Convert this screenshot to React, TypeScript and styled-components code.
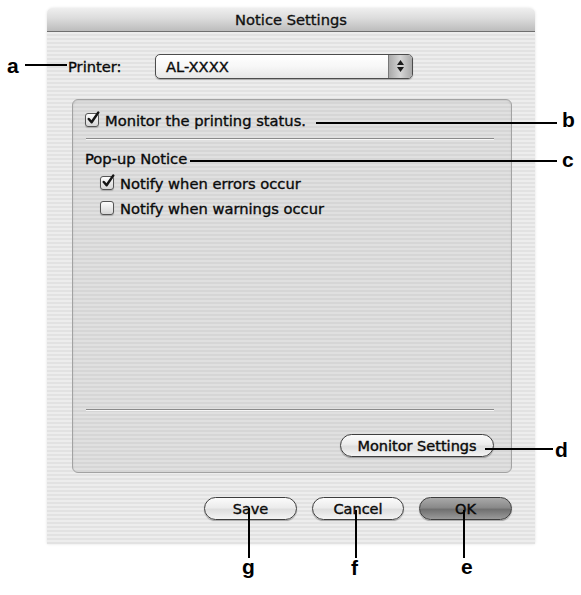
import React from "react";
import styled, { createGlobalStyle } from "styled-components";

const GlobalStyle = createGlobalStyle`
  html, body {
    margin: 0;
    padding: 0;
    background: #ffffff;
  }
  body {
    font-family: "DejaVu Sans", "Liberation Sans", sans-serif;
    color: #0a0a0a;
  }
`;

const Page = styled.div`
  position: relative;
  width: 581px;
  height: 595px;
  padding: 8px 0 0 47px;
  box-sizing: border-box;
  background: #fff;
`;

const Window = styled.div`
  width: 488px;
  height: 536px;
  display: flex;
  flex-direction: column;
  border-radius: 6px 6px 0 0;
  overflow: hidden;
  background: repeating-linear-gradient(
    to bottom,
    #ededed 0px,
    #ededed 2px,
    #e2e2e2 2px,
    #e2e2e2 4px
  );
  box-shadow: 0 0 3px rgba(0, 0, 0, 0.12);
`;

const TitleBar = styled.div`
  height: 23px;
  flex: none;
  display: flex;
  align-items: center;
  justify-content: center;
  background: linear-gradient(to bottom, #efefef 0%, #dcdcdc 45%, #bcbcbc 100%);
  border-bottom: 1px solid #6f6f6f;
  font-size: 14.7px;
  color: #111;
  -webkit-text-stroke: 0.35px #111;
`;

const Body = styled.div`
  flex: 1;
  display: flex;
  flex-direction: column;
  padding: 22px 23px 21px 21px;
`;

const PrinterRow = styled.div`
  display: flex;
  align-items: center;
  height: 24px;
`;

const Label = styled.span`
  font-size: 14.7px;
  width: 87px;
  -webkit-text-stroke: 0.35px #0a0a0a;
`;

const Popup = styled.div`
  width: 258px;
  height: 25px;
  box-sizing: border-box;
  display: flex;
  border: 1px solid #4c4c4c;
  border-radius: 5px;
  overflow: hidden;
  background: linear-gradient(to bottom, #ffffff 0%, #f7f7f7 50%, #e6e6e6 100%);
  box-shadow: 0 1px 1px rgba(0, 0, 0, 0.25);
`;

const PopupValue = styled.span`
  flex: 1;
  display: flex;
  align-items: center;
  padding-left: 10px;
  font-size: 14.7px;
  -webkit-text-stroke: 0.35px #0a0a0a;
`;

const Stepper = styled.span`
  width: 23px;
  display: flex;
  flex-direction: column;
  align-items: center;
  justify-content: center;
  gap: 2px;
  border-left: 1px solid #777;
  background: linear-gradient(to right, #a9a9a9, #d6d6d6 50%, #a8a8a8);
`;

const Group = styled.div`
  margin: 21px 0 0 4px;
  height: 374px;
  box-sizing: border-box;
  display: flex;
  flex-direction: column;
  padding: 11px 17px 15px 12px;
  border: 1px solid #a2a2a2;
  border-radius: 6px;
  background: rgba(0, 0, 0, 0.05);
  box-shadow: inset 0 1px 2px rgba(0, 0, 0, 0.1);
`;

const CheckRow = styled.label<{ indent?: boolean }>`
  display: flex;
  align-items: center;
  gap: 6px;
  height: 18px;
  padding-left: ${(p) => (p.indent ? "15px" : "0")};
  margin-top: ${(p) => (p.indent ? "7px" : "0")};
  font-size: 14.7px;
  -webkit-text-stroke: 0.35px #0a0a0a;
`;

const Box = styled.span`
  width: 14px;
  height: 14px;
  flex: none;
  box-sizing: border-box;
  border: 1px solid #555;
  border-radius: 3px;
  background: linear-gradient(to bottom, #fdfdfd, #d6d6d6);
  position: relative;
  box-shadow: 0 1px 1px rgba(0, 0, 0, 0.2);
`;

const Separator = styled.div<{ gap?: number }>`
  height: 1px;
  margin: ${(p) => p.gap ?? 9}px 0 0 1px;
  background: #8a8a8a;
  border-bottom: 1px solid #f6f6f6;
`;

const SectionTitle = styled.div`
  margin-top: 9px;
  height: 18px;
  display: flex;
  align-items: center;
  font-size: 14.7px;
  -webkit-text-stroke: 0.35px #0a0a0a;
`;

const Spacer = styled.div`
  flex: 1;
`;

const ButtonRow = styled.div<{ gap?: number; top?: number }>`
  display: flex;
  justify-content: flex-end;
  gap: ${(p) => p.gap ?? 15}px;
  margin-top: ${(p) => p.top ?? 0}px;
`;

const PillButton = styled.button<{ primary?: boolean; w: number }>`
  width: ${(p) => p.w}px;
  height: 23px;
  padding: 0;
  border: 1px solid #3e3e3e;
  border-radius: 12px;
  font-family: "DejaVu Sans", "Liberation Sans", sans-serif;
  font-size: 14.5px;
  color: #0a0a0a;
  -webkit-text-stroke: 0.4px #0a0a0a;
  background: ${(p) =>
    p.primary
      ? "linear-gradient(to bottom, #a9a9a9 0%, #8a8a8a 45%, #707070 55%, #9a9a9a 100%)"
      : "linear-gradient(to bottom, #fbfbfb 0%, #ececec 45%, #dedede 55%, #f4f4f4 100%)"};
  box-shadow: 0 1px 1px rgba(0, 0, 0, 0.3);
`;

const Callout = styled.div`
  position: absolute;
  background: #000;
`;

const Letter = styled.span`
  position: absolute;
  font-family: "Liberation Sans", Arial, sans-serif;
  font-weight: 700;
  font-size: 21px;
  line-height: 1;
  color: #000;
`;

const CheckMark = () => (
  <svg
    width="14"
    height="14"
    viewBox="0 0 14 14"
    style={{ position: "absolute", left: 0, top: -3 }}
  >
    <path
      d="M2.8 8 L5.6 11.2 L12.2 1.6"
      fill="none"
      stroke="#151515"
      strokeWidth="2.5"
      strokeLinecap="round"
      strokeLinejoin="round"
    />
  </svg>
);

const Arrows = () => (
  <>
    <svg width="7" height="5" viewBox="0 0 7 5">
      <path d="M3.5 0 L7 5 L0 5 Z" fill="#1b1b1b" />
    </svg>
    <svg width="7" height="5" viewBox="0 0 7 5">
      <path d="M0 0 L7 0 L3.5 5 Z" fill="#1b1b1b" />
    </svg>
  </>
);

const Check: React.FC<{ checked?: boolean; label: string; indent?: boolean }> = ({
  checked,
  label,
  indent,
}) => (
  <CheckRow indent={indent}>
    <Box>{checked && <CheckMark />}</Box>
    {label}
  </CheckRow>
);

export default function App() {
  return (
    <>
      <GlobalStyle />
      <Page>
        <Window>
          <TitleBar>Notice Settings</TitleBar>
          <Body>
            <PrinterRow>
              <Label>Printer:</Label>
              <Popup>
                <PopupValue>AL-XXXX</PopupValue>
                <Stepper>
                  <Arrows />
                </Stepper>
              </Popup>
            </PrinterRow>
            <Group>
              <Check checked label="Monitor the printing status." />
              <Separator />
              <SectionTitle>Pop-up Notice</SectionTitle>
              <Check indent checked label="Notify when errors occur" />
              <Check indent label="Notify when warnings occur" />
              <Spacer />
              <Separator gap={0} />
              <ButtonRow top={23}>
                <PillButton w={154}>Monitor Settings</PillButton>
              </ButtonRow>
            </Group>
            <ButtonRow top={24}>
              <PillButton w={93}>Save</PillButton>
              <PillButton w={92}>Cancel</PillButton>
              <PillButton w={93} primary>
                OK
              </PillButton>
            </ButtonRow>
          </Body>
        </Window>

        <Letter style={{ left: 7, top: 55 }}>a</Letter>
        <Callout style={{ left: 25, top: 64, width: 42, height: 2 }} />

        <Callout style={{ left: 316, top: 122, width: 241, height: 2 }} />
        <Letter style={{ left: 562, top: 109 }}>b</Letter>

        <Callout style={{ left: 190, top: 160, width: 367, height: 2 }} />
        <Letter style={{ left: 562, top: 149 }}>c</Letter>

        <Callout style={{ left: 485, top: 448, width: 68, height: 2 }} />
        <Letter style={{ left: 555, top: 439 }}>d</Letter>

        <Callout style={{ left: 248, top: 508, width: 2, height: 50 }} />
        <Letter style={{ left: 242, top: 556 }}>g</Letter>

        <Callout style={{ left: 355, top: 510, width: 2, height: 48 }} />
        <Letter style={{ left: 351, top: 557 }}>f</Letter>

        <Callout style={{ left: 463, top: 510, width: 2, height: 48 }} />
        <Letter style={{ left: 461, top: 556 }}>e</Letter>
      </Page>
    </>
  );
}
